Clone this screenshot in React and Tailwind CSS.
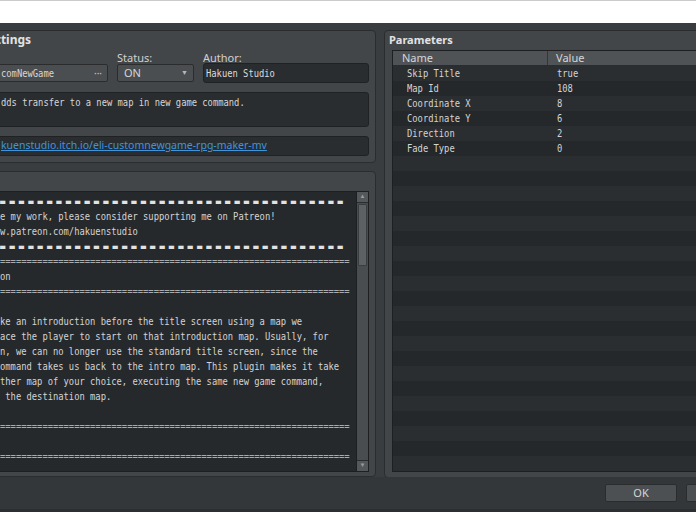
import React from 'react';

const sans = "font-['Noto_Sans','Open_Sans',sans-serif]";

// condensed monospace text, like the editor's fixed-width font
const Mono = ({ children, className = '' }) => (
  <span
    className={`block shrink-0 origin-left scale-x-80 whitespace-pre font-['DejaVu_Sans_Mono',monospace] text-[11px] leading-[15px] ${className}`}
  >
    {children}
  </span>
);

const params = [
  ['Skip Title', 'true'],
  ['Map Id', '108'],
  ['Coordinate X', '8'],
  ['Coordinate Y', '6'],
  ['Direction', '2'],
  ['Fade Type', '0'],
];

const thinRule = '='.repeat(66);
const thickRule = '▬'.repeat(37);

const helpLines = [
  { t: thickRule, thick: true },
  { t: 'e my work, please consider supporting me on Patreon!' },
  { t: 'w.patreon.com/hakuenstudio' },
  { t: thickRule, thick: true },
  { t: thinRule, rule: true },
  { t: 'on' },
  { t: thinRule, rule: true },
  { t: '' },
  { t: 'ke an introduction before the title screen using a map we' },
  { t: 'ace the player to start on that introduction map. Usually, for' },
  { t: 'n, we can no longer use the standard title screen, since the' },
  { t: 'ommand takes us back to the intro map. This plugin makes it take' },
  { t: 'ther map of your choice, executing the same new game command,' },
  { t: ' the destination map.' },
  { t: '' },
  { t: thinRule, rule: true },
  { t: '' },
  { t: thinRule, rule: true },
];

export default function App() {
  return (
    <div className={`w-[696px] h-[512px] overflow-hidden bg-white ${sans}`}>
      {/* strip above the window */}
      <div className="h-[23px] bg-white border-t border-[#c9cbcc]" />

      <div className="h-[489px] bg-[#3a3d40] flex flex-col">
        <div className="flex gap-[8px] pt-[7px] -ml-[40px] h-[454px]">
          {/* left column */}
          <div className="w-[416px] shrink-0 flex flex-col gap-[8px]">
            {/* plugin settings */}
            <div className="h-[133px] bg-[#434649] border border-[#2a2c2e] rounded-[4px] px-[6px]">
              <div className="h-[18px] flex items-center">
                <span className="text-[12px] font-bold text-[#e2e2e2] -ml-[26px]">Plugin Settings</span>
              </div>
              <div className="h-[15px] flex gap-[9px] items-end text-[11px] leading-[13px] text-[#cfd0d1]">
                <span className="w-[141px] -ml-[8px] mr-[8px]">Name:</span>
                <span className="w-[77px]">Status:</span>
                <span>Author:</span>
              </div>
              <div className="h-[18px] flex gap-[9px]">
                <div className="w-[141px] bg-[#4b4e51] border border-[#2a2c2e] rounded-[2px] flex items-center justify-between pl-[33px] pr-[5px] text-[#d6d6d6] overflow-hidden">
                  <Mono>comNewGame</Mono>
                  <span className="text-[10px] leading-none text-[#c4c4c4]">···</span>
                </div>
                <div className="w-[77px] bg-[#4b4e51] border border-[#2a2c2e] rounded-[2px] flex items-center justify-between pl-[6px] pr-[5px] text-[#d6d6d6]">
                  <span className="text-[11px]">ON</span>
                  <span className="text-[7px] text-[#b8b8b8]">▼</span>
                </div>
                <div className="flex-1 -mt-[1px] h-[20px] bg-[#2a2d30] border border-[#1f2123] rounded-[3px] flex items-center pl-[2px] text-[#dcdcdc]">
                  <Mono>Hakuen Studio</Mono>
                </div>
              </div>
              <div className="mt-[10px] h-[35px] bg-[#2a2d30] border border-[#1f2123] rounded-[3px] pl-[33px] pt-[2px] text-[#d6d6d6] flex items-start">
                <Mono>dds transfer to a new map in new game command.</Mono>
              </div>
              <div className="mt-[9px] h-[20px] bg-[#2a2d30] border border-[#1f2123] rounded-[3px] pl-[33px] flex items-center">
                <span className="text-[10.5px] text-[#3f94dc] underline">kuenstudio.itch.io/eli-customnewgame-rpg-maker-mv</span>
              </div>
            </div>

            {/* help */}
            <div className="h-[307px] bg-[#434649] border border-[#2a2c2e] rounded-[4px] px-[6px] flex flex-col">
              <div className="h-[19px] shrink-0 flex items-center">
                <span className="text-[12px] font-bold text-[#e2e2e2] -ml-[6px]">Help</span>
              </div>
              <div className="h-[281px] bg-[#26292c] border border-[#1d1f21] flex">
                <div className="flex-1 overflow-hidden pl-[32px] pt-[2px] text-[#d4d4d4]">
                  {helpLines.map((l, i) => (
                    <div key={i} className="h-[15px] flex overflow-hidden">
                      <Mono
                        className={`${l.thick ? 'tracking-[5.1px] font-bold text-[#e2e2e2]' : ''} ${l.rule ? 'text-[#a9abad]' : ''}`}
                      >
                        {l.t || ' '}
                      </Mono>
                    </div>
                  ))}
                </div>
                {/* scrollbar */}
                <div className="w-[12px] shrink-0 bg-[#4a4d50] border-l border-[#1d1f21] flex flex-col">
                  <div className="h-[11px] bg-[#55585b] border-b border-[#2a2c2e] flex items-center justify-center text-[6px] text-[#9a9c9e]">▲</div>
                  <div className="h-[62px] mt-[1px] mx-[1px] bg-[#5e6164] border border-[#3a3c3e] rounded-[1px]" />
                  <div className="flex-1" />
                  <div className="h-[11px] bg-[#55585b] border-t border-[#2a2c2e] flex items-center justify-center text-[6px] text-[#9a9c9e]">▼</div>
                </div>
              </div>
            </div>
          </div>

          {/* parameters */}
          <div className="w-[420px] shrink-0 h-[448px] bg-[#434649] border border-[#2a2c2e] rounded-[4px] flex flex-col pb-[5px]">
            <div className="h-[19px] shrink-0 flex items-center pl-[4px] text-[11px] font-bold text-[#e2e2e2]">Parameters</div>
            <div className="ml-[7px] flex-1 bg-[#27292c] border border-[#1d1f21] overflow-hidden">
              <div className="h-[15px] flex bg-[#505356] border-b border-[#2a2c2e] text-[11px] text-[#d6d6d6] leading-[14px]">
                <div className="w-[155px] pl-[9px] border-r border-[#34373a]">Name</div>
                <div className="pl-[8px]">Value</div>
              </div>
              {Array.from({ length: 28 }).map((_, i) => {
                const p = params[i];
                return (
                  <div
                    key={i}
                    className={`h-[15px] flex text-[#d4d4d4] ${i % 2 === 0 ? 'bg-[#2b2e31]' : 'bg-[#25282b]'}`}
                  >
                    <div className="w-[155px] pl-[14px] flex overflow-hidden">{p && <Mono>{p[0]}</Mono>}</div>
                    <div className="pl-[9px] flex">{p && <Mono>{p[1]}</Mono>}</div>
                  </div>
                );
              })}
            </div>
          </div>
        </div>

        {/* bottom buttons */}
        <div className="flex-1 bg-[#34373a] flex items-center pl-[605px] gap-[9px] border-b-[3px] border-[#2c2e30]">
          <button className="w-[72px] h-[18px] shrink-0 bg-[#4d5053] border border-[#2a2c2e] rounded-[2px] text-[11px] text-[#d6d6d6]">OK</button>
          <button className="w-[72px] h-[18px] shrink-0 bg-[#4d5053] border border-[#2a2c2e] rounded-[2px] text-[11px] text-[#d6d6d6]">Cancel</button>
        </div>
      </div>
    </div>
  );
}
